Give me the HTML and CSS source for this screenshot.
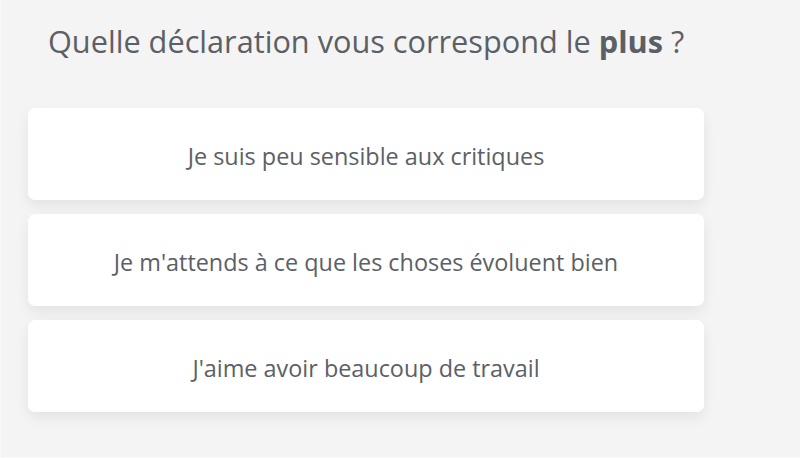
FILE: index.html
```html
<!DOCTYPE html>
<html lang="fr">
<head>
<meta charset="utf-8">
<link rel="stylesheet" href="styles.css">
</head>
<body>
<main class="page">
  <h1 class="question">Quelle déclaration vous correspond le <strong>plus</strong> ?</h1>
  <div class="options">
    <button class="option">Je suis peu sensible aux critiques</button>
    <button class="option">Je m'attends à ce que les choses évoluent bien</button>
    <button class="option">J'aime avoir beaucoup de travail</button>
  </div>
</main>
</body>
</html>
```
FILE: styles.css
```css
html, body {
  margin: 0;
  padding: 0;
}
body {
  background: #f4f4f4;
  font-family: "Open Sans", "Noto Sans", sans-serif;
  width: 800px;
  height: 458px;
  overflow: hidden;
  box-sizing: border-box;
  border-left: 1px solid #fafafa;
  border-bottom: 1px solid #fafafa;
}
.page {
  padding: 0 0 0 27px;
}
.question {
  margin: 0;
  padding: 18px 0 0 20px;
  height: 108px;
  box-sizing: border-box;
  font-size: 30.7px;
  font-weight: 400;
  color: #5b6066;
  line-height: 46px;
}
.question strong {
  font-weight: 700;
}
.options {
  display: flex;
  flex-direction: column;
  gap: 14px;
  width: 676px;
}
.option {
  display: block;
  width: 100%;
  height: 92px;
  border: none;
  border-radius: 7px;
  background: #ffffff;
  box-shadow: 0 6px 14px rgba(0, 0, 0, 0.07);
  font-family: "Open Sans", "Noto Sans", sans-serif;
  font-size: 23.4px;
  color: #5b6066;
  text-align: center;
  padding: 3px 0 0 0;
}
```
